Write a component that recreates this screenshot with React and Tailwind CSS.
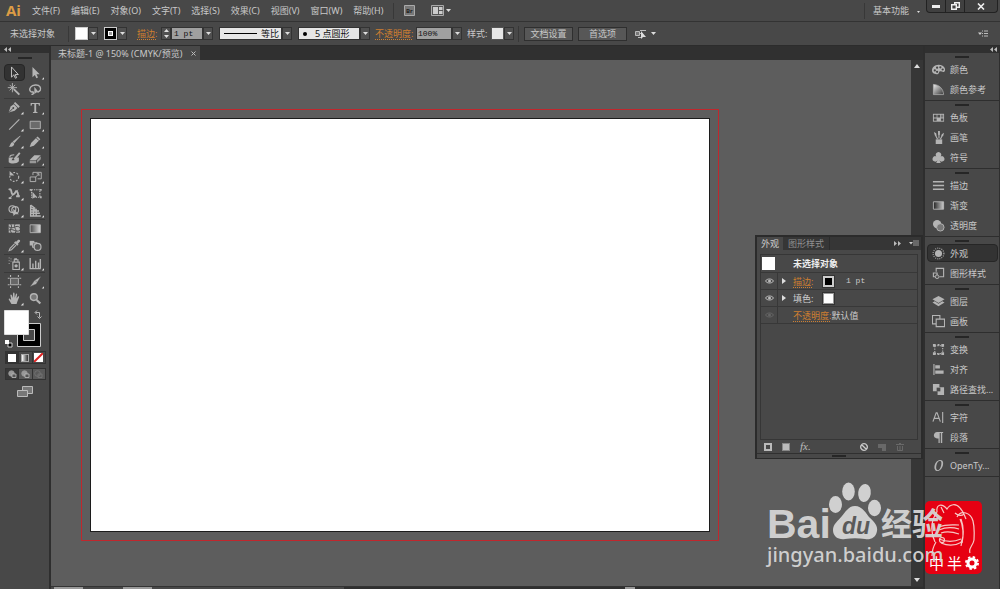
import { useState } from "react";

const line = { fill: "none", stroke: "currentColor", strokeWidth: 1.2 };

// Tool glyphs, drawn on a 14x14 grid
const glyphs = {
  select: <path d="M4 1v11l2.6-2.4 1.6 3.6 1.4-.6L8 9.200h3.400z" fill="#333" stroke="#ccc" strokeWidth="1" />,
  direct: <path d="M4 1v11l2.600-2.400 1.600 3.600 1.800-.8L8.400 9h3.400z" fill="currentColor" />,
  wand: (
    <>
      <path d="M6.500 6.500l6 6" stroke="currentColor" strokeWidth="2" />
      <path d="M5 0v10M0 5h10M2 2l6 6M8 2L2 8" stroke="currentColor" strokeWidth="1" />
    </>
  ),
  lasso: (
    <>
      <path d="M5 10C1 10 0 7 2 4.500S10 1 12 4s0 5-2 5.500M4 9c2 1 1 4-1 3" {...line} strokeWidth="1.500" />
      <path d="M6 4v8l2-1.800h3z" fill="currentColor" />
    </>
  ),
  pen: (
    <>
      <path d="M8 1l5 5-1.500 1.500-5-5zM6.500 3.500L3 6 1 12.500 7.500 10.500 10.500 7.500z" fill="currentColor" />
      <path d="M1.500 12l4-4" stroke="#444" strokeWidth="1" />
      <circle cx="6" cy="7.500" r="1" fill="#444" />
    </>
  ),
  type: <path d="M2 2h10v3h-1l-.6-1.700H8v8.200l1.500.5v1h-5v-1l1.500-.5V3.300H3.600L3 5H2z" fill="currentColor" />,
  line: <path d="M1.500 12.500l11-11" {...line} />,
  rect: <path d="M1.500 3.500h11v8h-11z" fill="#6b6b6b" stroke="currentColor" />,
  brush: (
    <>
      <path d="M13.500 1L7 8.500 5.500 7.200z" fill="currentColor" stroke="currentColor" strokeWidth=".6" />
      <path d="M5 7.500l2 1.800c0 2.500-3 4-6 3.200 2-1 1.500-4 4-5z" fill="currentColor" />
    </>
  ),
  pencil: (
    <>
      <path d="M9.500 1.500L12.500 4.500 5.500 11.500 1 13l1.500-4.500z" fill="currentColor" />
      <path d="M8 3l3 3" stroke="#444" />
    </>
  ),
  blob: (
    <>
      <path d="M1 6h5l-2 3h3l2-3h3v4c-2 3-9 3-11 1z" fill="currentColor" />
      <path d="M13 1L7 8" stroke="currentColor" strokeWidth="2" />
      <path d="M2 5c1-2 4-2 5-2" {...line} />
    </>
  ),
  eraser: (
    <>
      <path d="M6 3.500h7l-5 5H1z" fill="currentColor" />
      <path d="M1 9.200h7v3H1zM9 8.700l4-4v3l-4 4z" fill="#999" />
    </>
  ),
  rotate: (
    <>
      <circle cx="7" cy="7.500" r="4.800" {...line} strokeDasharray="2 1.500" />
      <path d="M2 1v5h5L5.500 4.200z" fill="currentColor" />
    </>
  ),
  scale: <path d="M1.500 7.500h6v5h-6zM4.500 5.500v-3h9v7h-4M7 8l4-4M8.500 4H11v2.500" {...line} strokeWidth="1" />,
  width: (
    <>
      <path d="M1 3c4-3 2 6 5 5s2-5 4-3 0 5 3 5" {...line} strokeWidth="2" />
      <path d="M2 12l9-9" {...line} strokeWidth="1" />
      <path d="M1 11h3v2H1zM9 9h3v2H9z" fill="currentColor" />
    </>
  ),
  transform: (
    <>
      <path d="M3 3h9v8H3z" {...line} strokeDasharray="1.500 1" />
      <path d="M4 5v8l2-2h3z" fill="currentColor" />
      <path d="M1 2h2v2H1zM12 2h2v2h-2zM12 10h2v2h-2z" fill="currentColor" />
    </>
  ),
  shape: (
    <>
      <circle cx="5" cy="5.500" r="3.700" {...line} />
      <circle cx="8" cy="6.500" r="3.700" {...line} />
      <path d="M6 5v8l2.200-2H12z" fill="currentColor" />
    </>
  ),
  perspective: (
    <path d="M2 1v12h11M5 3v10M8 5v8M2 4l7 4M2 7.500h9M2 10h10M2 1l5 4" {...line} strokeWidth="1.500" />
  ),
  mesh: (
    <>
      <path d="M1 2.500h12v9H1z" fill="currentColor" />
      <path d="M3 2c3 3-2 6 1 10M8 2c-3 4 3 6 0 10M1 5c5 4 8-3 12 1M1 9c4-3 8 3 12 0" stroke="#444" fill="none" />
    </>
  ),
  gradient: (
    <>
      <defs>
        <linearGradient id="toolGrad">
          <stop stopColor="#444" />
          <stop offset="1" stopColor="#ddd" />
        </linearGradient>
      </defs>
      <path d="M1.500 3h11v8.500h-11z" fill="url(#toolGrad)" stroke="currentColor" />
    </>
  ),
  eyedropper: (
    <>
      <path d="M9 3l2-2c2-1 3 1 2 2l-2 2 .7.700-1.500 1.500L6.800 3.800l1.500-1.500z" fill="currentColor" />
      <path d="M7.500 5L2.500 10 1.500 12.500 4 11.500 9 6.500" {...line} />
    </>
  ),
  blend: (
    <>
      <path d="M1 2h5v5H1z" fill="currentColor" />
      <path d="M4 4h5v5H4z" fill="#777" stroke="currentColor" />
      <circle cx="9.500" cy="8.500" r="3.700" fill="#555" stroke="currentColor" strokeWidth="1.300" />
    </>
  ),
  spray: (
    <>
      <path d="M5.500 5.500h7v8h-7zM7 5V3h4v2M7 2h3" {...line} />
      <circle cx="9" cy="9.500" r="1.800" fill="currentColor" />
      <path d="M4 2H3M2 1H1M2 4H1M4 4.500H3M1 7h1" stroke="currentColor" />
    </>
  ),
  graph: <path d="M1.500 1v11.500H13M4.500 12V7M7.500 12V4M10.500 12V6M12.500 12V2" {...line} strokeWidth="1.500" />,
  artboard: (
    <>
      <path d="M3 3.500h8.500v7H3z" fill="#666" stroke="currentColor" />
      <path d="M3 0v2M11.500 0v2M3 12v2M11.500 12v2M0 3.500h2M0 10.500h2M12.500 3.500h2M12.500 10.500h2" {...line} />
    </>
  ),
  slice: <path d="M13.500 1L6 6 4 9 1 13l4-2 3-1zM7 6l2 2" fill="currentColor" stroke="#444" strokeWidth=".5" />,
  hand: (
    <path
      d="M4 13L1 8c0-1 1-1.500 2 0l.7.700L2.800 3.500c0-1.200 1.200-1.200 1.600 0l1 3L5.700 1.500c.2-1.200 1.500-1.200 1.600 0l.2 4.800 1.200-4c.4-1.200 1.500-.8 1.400.3l-.7 4.400 1.500-2c.8-1 1.700-.3 1.300.6L10.500 10 9.500 13z"
      fill="currentColor"
    />
  ),
  zoom: (
    <>
      <circle cx="5.500" cy="5.500" r="3.700" fill="#777" stroke="currentColor" strokeWidth="1.500" />
      <path d="M8.500 8.500l4 4" stroke="currentColor" strokeWidth="2.300" />
    </>
  ),
};

const toolGroups = [
  ["select", "direct", "wand", "lasso"],
  ["pen", "type", "line", "rect", "brush", "pencil", "blob", "eraser"],
  ["rotate", "scale", "width", "transform", "shape", "perspective"],
  ["mesh", "gradient", "eyedropper", "blend"],
  ["spray", "graph"],
  ["artboard", "slice", "hand", "zoom"],
];

const noFlyout = ["select", "wand", "lasso", "transform", "mesh", "gradient", "blend", "artboard", "zoom"];

// Dock glyphs, same 14x14 grid
const dockGlyphs = {
  palette: (
    <>
      <path d="M7 2C3 2 0 5 0 8s3 4 6 4c2 0 1-3 3-3s4 2 5-1S11 2 7 2z" fill="currentColor" />
      <g fill="#444">
        <circle cx="3" cy="8" r="1.200" />
        <circle cx="5.500" cy="5" r="1.200" />
        <circle cx="9" cy="4.700" r="1.200" />
        <circle cx="11.500" cy="7" r="1.200" />
        <circle cx="5.500" cy="9.500" r="1.200" />
      </g>
    </>
  ),
  guide: (
    <>
      <defs>
        <linearGradient id="guideGrad" x1="0" y1="0" x2="1" y2="1">
          <stop stopColor="#eee" />
          <stop offset="1" stopColor="#333" />
        </linearGradient>
      </defs>
      <path d="M1.500 1.500C8 2 12 6 12.500 12.500h-11z" fill="url(#guideGrad)" stroke="currentColor" strokeWidth=".8" />
    </>
  ),
  swatches: (
    <>
      <path d="M1 3h12v8.500H1z" fill="currentColor" />
      <path d="M2 4h3v3H2zM5.800 4h3v3h-3zM2 8h3v2.500H2zM9.600 8h2.600v2.500H9.600z" fill="#4a4a4a" />
      <path d="M9.600 4h2.600v3H9.600z" fill="#777" />
    </>
  ),
  brushes: (
    <>
      <path d="M4 9h7v5H4z" fill="currentColor" />
      <path d="M6 9L3.500 4M7.500 8V3M9 9l2.500-5" {...line} />
      <path d="M2 1l2.500 1.500.5 2.500-2-.5zM6.500 0h2v4h-2zM13 2l-1 3.500-2 .5.500-2.500z" fill="currentColor" />
    </>
  ),
  symbols: (
    <path
      d="M7 1a3 3 0 0 1 2.400 4.800A2.900 2.900 0 1 1 8 10l1.500 3h-5L6 10a2.900 2.900 0 1 1-1.400-4.200A3 3 0 0 1 7 1z"
      fill="currentColor"
    />
  ),
  stroke: <path d="M1 3h12M1 7h12M1 11h12" stroke="currentColor" strokeWidth="1.500" />,
  gradient: (
    <>
      <defs>
        <linearGradient id="dockGrad">
          <stop stopColor="#222" />
          <stop offset="1" stopColor="#ccc" />
        </linearGradient>
      </defs>
      <path d="M1.500 3h11v8h-11z" fill="url(#dockGrad)" stroke="currentColor" />
    </>
  ),
  transparency: (
    <>
      <circle cx="5.500" cy="5.500" r="4.500" fill="currentColor" />
      <circle cx="9" cy="9" r="4" fill="#777" stroke="currentColor" />
    </>
  ),
  appearance: (
    <>
      <circle cx="7" cy="7" r="3.800" fill="currentColor" />
      <circle cx="7" cy="7" r="5.800" {...line} strokeDasharray="1 1.300" />
    </>
  ),
  styles: (
    <>
      <path d="M4.500 5V1.500h8v9H8" {...line} />
      <path d="M1.500 6.500h4v4h-4z" {...line} />
      <circle cx="5.500" cy="10.500" r="2" fill="#555" stroke="currentColor" />
    </>
  ),
  layers: (
    <>
      <path d="M7 1l6.500 3.700L7 8.500.5 4.700z" fill="currentColor" />
      <path d="M.5 8L3 6.800 7 9.300l4-2.500L13.500 8 7 12z" fill="currentColor" />
    </>
  ),
  artboards: <path d="M4.500 9.500h-4v-9h8v4M4.500 4.500h9v8h-9z" {...line} />,
  transform: (
    <>
      <path d="M3 3h8.500v8.500H3z" {...line} strokeDasharray="1.500 1.200" />
      <path d="M1 1h3v3H1zM10 1h3v3h-3zM1 10h3v3H1zM10 10h3v3h-3zM6 1h2v2H6zM6 11h2v2H6z" fill="currentColor" />
    </>
  ),
  align: <path d="M1.500 1h1.200v12H1.500zM3.500 2.500h5v3.500h-5zM3.500 8h9v3.500h-9z" fill="currentColor" />,
  pathfinder: (
    <>
      <path d="M1 1h7v3.500h5V13H6V9H1z" fill="currentColor" />
      <path d="M5 5h4v4H5z" fill="#4a4a4a" />
    </>
  ),
  character: <path d="M1 11.500L4.500 2h1L9 11.500M2.500 8h5M11.500 1v12" {...line} />,
  paragraph: <path d="M5.500 1H12v1.200h-1V13H9.500V2.200H8.300V13H7V8C3 8 2 6 2 4.500S3.500 1 5.500 1z" fill="currentColor" />,
  opentype: (
    <path
      fillRule="evenodd"
      d="M9 1c3 0 3.500 3 2.700 6S8.500 13 6 13s-4-2.500-3.200-6S6 1 9 1zM8.500 2C6.500 2 5.300 4.500 4.700 7S4.600 12 6.300 12s2.900-2.500 3.500-5S10.300 2 8.500 2z"
      fill="currentColor"
    />
  ),
};

const dockGroups = [
  [["palette", "颜色"], ["guide", "颜色参考"]],
  [["swatches", "色板"], ["brushes", "画笔"], ["symbols", "符号"]],
  [["stroke", "描边"], ["gradient", "渐变"], ["transparency", "透明度"]],
  [["appearance", "外观"], ["styles", "图形样式"]],
  [["layers", "图层"], ["artboards", "画板"]],
  [["transform", "变换"], ["align", "对齐"], ["pathfinder", "路径查找..."]],
  [["character", "字符"], ["paragraph", "段落"]],
  [["opentype", "OpenTy..."]],
];

const menus = ["文件(F)", "编辑(E)", "对象(O)", "文字(T)", "选择(S)", "效果(C)", "视图(V)", "窗口(W)", "帮助(H)"];

function Down() {
  return (
    <svg viewBox="0 0 5 3" className="w-[5px] h-[3px] shrink-0">
      <path d="M0 0h5L2.500 3z" fill="#ddd" />
    </svg>
  );
}

function DropButton({ label }) {
  return (
    <button
      aria-label={label}
      className="w-[10px] h-[13px] shrink-0 flex items-center justify-center bg-[#505050] border border-[#333]"
    >
      <Down />
    </button>
  );
}

function Divider() {
  return <span className="w-px h-4 shrink-0 bg-[#383838]" />;
}

function Chevrons({ right }) {
  return (
    <svg viewBox="0 0 7 5" className="w-[7px] h-[5px]">
      <path d={right ? "M0 0l3 2.500L0 5zM4 0l3 2.500L4 5z" : "M3 0L0 2.500 3 5zM7 0L4 2.500 7 5z"} fill="#bbb" />
    </svg>
  );
}

function MenuBar() {
  return (
    <header className="h-[22px] shrink-0 flex items-center pl-1.5 border-b border-[#333] bg-[#484848]">
      <span className="w-[26px] font-['Open_Sans',sans-serif] text-[15px] leading-none font-bold text-[#dc9c45]">Ai</span>
      <nav className="flex gap-[11px]">
        {menus.map((m) => (
          <button key={m}>{m}</button>
        ))}
      </nav>
      <div className="flex items-center gap-2.5 ml-2.5">
        <Divider />
        <button aria-label="Bridge">
          <svg viewBox="0 0 11 11" className="w-[11px] h-[11px]">
            <path d="M.5.500h10v10H.5z" fill="#777" stroke="#aaa" />
            <text x="2" y="8" fontSize="6" fontWeight="bold" fill="#222">Br</text>
          </svg>
        </button>
        <button aria-label="排列文档" className="flex items-center gap-0.5 ml-1.5">
          <svg viewBox="0 0 13 11" className="w-[13px] h-[11px]">
            <path d="M.5.500h12v10H.5z" fill="#555" stroke="#aaa" />
            <path d="M2 2h5v7H2zM8 2h3.500v3H8zM8 6h3.500v3H8z" fill="#ccc" />
          </svg>
          <Down />
        </button>
      </div>
      <div className="ml-auto self-stretch flex items-center">
        <Divider />
        <button className="flex items-center gap-2 pl-2 pr-1.5">
          基本功能
          <svg viewBox="0 0 3 2" className="w-[3px] h-0.5 mt-0.5">
            <path d="M0 0h3L1.500 2z" fill="#ddd" />
          </svg>
        </button>
        <div className="self-start h-[13px] mr-0.5 flex rounded-b-sm border border-t-0 border-[#222] bg-[#404040] divide-x divide-[#222]">
          <button aria-label="最小化" className="w-[19px] flex items-center justify-center">
            <span className="w-2 h-[3px] bg-[#eee]" />
          </button>
          <button aria-label="还原" className="w-[19px] flex items-center justify-center">
            <svg viewBox="0 0 9 8" className="w-[9px] h-2">
              <path d="M3.700.700h4.600v4.600H3.700z" fill="none" stroke="#eee" strokeWidth="1.400" />
              <path d="M.7 2.700h4.600v4.600H.7z" fill="#404040" stroke="#eee" strokeWidth="1.400" />
            </svg>
          </button>
          <button aria-label="关闭" className="w-8 flex items-center justify-center">
            <svg viewBox="0 0 8 7" className="w-2 h-[7px]">
              <path d="M1 .5l6 6M7 .5l-6 6" stroke="#eee" strokeWidth="1.600" />
            </svg>
          </button>
        </div>
      </div>
    </header>
  );
}

function OptionsBar() {
  return (
    <div className="h-6 shrink-0 flex items-center pl-2.5 pr-3 border-b border-[#2c2c2c] bg-[#484848] whitespace-nowrap">
      <span className="w-[58px]">未选择对象</span>
      <Divider />
      <div className="flex ml-1.5">
        <button aria-label="填色" className="w-[13px] h-[13px] bg-white border border-[#ccc]" />
        <DropButton label="填色选项" />
      </div>
      <div className="flex ml-1.5">
        <button aria-label="描边颜色" className="w-[13px] h-[13px] bg-black border border-[#ccc] flex items-center justify-center">
          <span className="w-[5px] h-[5px] border border-white bg-[#999]" />
        </button>
        <DropButton label="描边颜色选项" />
      </div>
      <label htmlFor="weight" className="w-6 ml-2.5 text-[#cf7f30] underline decoration-dotted underline-offset-2">
        描边:
      </label>
      <button aria-label="调整粗细" className="w-2.5 h-[13px] flex items-center justify-center bg-[#505050] border border-[#333]">
        <svg viewBox="0 0 5 9" className="w-[5px] h-[9px]">
          <path d="M0 3h5L2.500 0zM0 6h5L2.500 9z" fill="#ddd" />
        </svg>
      </button>
      <input
        id="weight"
        defaultValue="1 pt"
        className="w-8 h-[13px] px-0.5 bg-[#a0a0a0] border border-[#333] text-[#111] font-['Liberation_Mono',monospace] text-[8px]"
      />
      <DropButton label="粗细预设" />
      <div className="flex ml-1.5">
        <div className="w-[63px] h-[13px] pl-1 flex items-center gap-1 bg-[#e6e6e6] border border-[#333]">
          <span className="flex-1 h-px bg-black" />
          <select aria-label="变量宽度配置文件" className="appearance-none w-5 h-[11px] text-[#111] leading-none">
            <option>等比</option>
          </select>
        </div>
        <DropButton label="宽度配置列表" />
      </div>
      <div className="flex ml-1.5">
        <div className="w-[62px] h-[13px] px-1 flex items-center gap-2 bg-[#e6e6e6] border border-[#333]">
          <span className="w-1 h-1 rounded-full bg-black" />
          <select aria-label="画笔定义" className="appearance-none flex-1 h-[11px] text-[#111] leading-none">
            <option>5 点圆形</option>
          </select>
        </div>
        <DropButton label="画笔列表" />
      </div>
      <label htmlFor="opacity" className="w-[41px] ml-[5px] text-[#cf7f30] underline decoration-dotted underline-offset-2">
        不透明度:
      </label>
      <input
        id="opacity"
        defaultValue="100%"
        className="w-9 h-[13px] px-px bg-[#a0a0a0] border border-[#333] text-[#111] font-['Liberation_Mono',monospace] text-[8px]"
      />
      <DropButton label="不透明度预设" />
      <span className="w-6 ml-[5px]">样式:</span>
      <button aria-label="图形样式" className="w-[13px] h-[13px] bg-[#e6e6e6] border border-[#555]" />
      <DropButton label="图形样式选项" />
      <span className="ml-1 mr-[5px] flex">
        <Divider />
      </span>
      <button className="w-[49px] h-[14px] leading-none border border-[#2f2f2f] bg-[#575757]">文档设置</button>
      <button className="w-[49px] h-[14px] ml-[5px] leading-none border border-[#2f2f2f] bg-[#575757]">首选项</button>
      <button aria-label="选择类似对象" className="ml-2 flex items-center gap-1">
        <svg viewBox="0 0 12 10" className="w-3 h-2.5">
          <path d="M.5 2.500h4v4h-4zM5 1.500h6M5 4.500h3M3 8.500h3" fill="#777" stroke="#bbb" />
          <path d="M6 2v8l2-2h3z" fill="#ddd" />
        </svg>
        <Down />
      </button>
      <button aria-label="面板选项" className="ml-auto">
        <svg viewBox="0 0 10 7" className="w-2.5 h-[7px]">
          <path d="M0 2.500h4L2 5z" fill="#ccc" />
          <path d="M4 1h1M6 1h4M4 3.500h1M6 3.500h4M4 6h1M6 6h4" stroke="#bbb" />
        </svg>
      </button>
    </div>
  );
}

function Toolbar() {
  const [active, setActive] = useState("select");

  return (
    <aside className="w-[51px] shrink-0 border-r-2 border-[#2e2e2e] bg-[#484848]">
      <div className="h-[7px] pl-1 flex items-center bg-[#303030]">
        <Chevrons />
      </div>
      <div className="h-[11px] flex justify-center pt-1">
        <span className="w-3.5 h-0.5 bg-[#262626]" />
      </div>
      <div className="px-1 divide-y divide-[#3a3a3a]">
        {toolGroups.map((group) => (
          <div key={group[0]} className="grid grid-cols-2">
            {group.map((name) => (
              <button
                key={name}
                aria-label={name}
                onClick={() => setActive(name)}
                className={
                  active === name
                    ? "h-[17px] text-[#b4b4b4] bg-[#323232] rounded-sm border border-[#262626]"
                    : "h-[17px] text-[#b4b4b4] border border-transparent"
                }
              >
                <svg viewBox="0 0 20 15" className="w-full h-full">
                  <g transform="translate(3 .5)">{glyphs[name]}</g>
                  {!noFlyout.includes(name) && <path d="M20 15h-3l3-3z" fill="#ddd" />}
                </svg>
              </button>
            ))}
          </div>
        ))}
      </div>
      {/* Fill and stroke */}
      <svg viewBox="0 0 49 40" className="w-[49px] h-10 mt-0.5">
        <path d="M17.500 14.500h23v23h-23z" fill="#000" stroke="#ccc" />
        <path d="M23.500 20.500h11v11h-11z" fill="#484848" stroke="#ccc" />
        <path d="M4.500 1.500h24v24h-24z" fill="#fff" stroke="#ddd" />
        <path d="M35.500 3.500h4v5M37 1.500l-2 2 2 2M37.500 7.500l2 2 2-2" fill="none" stroke="#bbb" />
        <path d="M8 34h4v4H8z" fill="#000" stroke="#ccc" />
        <path d="M5 31h4v4H5z" fill="#fff" />
      </svg>
      <div className="ml-[5px] mr-[3px] mt-0.5 h-[13px] flex border border-[#333] divide-x divide-[#333] *:flex-1 *:flex *:items-center *:justify-center">
        <button aria-label="颜色" className="bg-[#333]">
          <span className="w-2 h-2 bg-white" />
        </button>
        <button aria-label="渐变">
          <span className="w-2 h-2 border border-[#aaa] bg-linear-to-r from-white to-[#333]" />
        </button>
        <button aria-label="无">
          <svg viewBox="0 0 9 9" className="w-[9px] h-[9px]">
            <path d="M0 0h9v9H0z" fill="#fff" />
            <path d="M0 9L9 0" stroke="#d22" strokeWidth="2" />
          </svg>
        </button>
      </div>
      <div className="ml-[5px] mr-[3px] mt-1 h-3 flex border border-[#333] divide-x divide-[#333] *:flex-1 *:flex *:items-center *:justify-center">
        {["正常绘图", "背面绘图", "内部绘图"].map((mode, i) => (
          <button key={mode} aria-label={mode} className={i === 0 ? "bg-[#383838]" : "bg-[#5a5a5a]"}>
            <svg viewBox="0 0 9 8" className="w-[9px] h-2">
              <circle cx="3.500" cy="3.500" r="2.800" fill={i === 2 ? "none" : "#999"} stroke={i === 2 ? "#777" : "#999"} strokeWidth=".8" />
              <path d="M4 4h4v3.500H4z" fill={i === 2 ? "none" : "#555"} stroke={i === 2 ? "#777" : "#bbb"} strokeWidth=".8" />
            </svg>
          </button>
        ))}
      </div>
      <button aria-label="更改屏幕模式" className="block mx-auto mt-1.5">
        <svg viewBox="0 0 16 12" className="w-4 h-3">
          <path d="M5.500.500h10v7h-10z" fill="#777" stroke="#bbb" />
          <path d="M.5 4.500h10v6H.5z" fill="#777" stroke="#bbb" />
        </svg>
      </button>
    </aside>
  );
}

function Eye({ dim }) {
  return (
    <svg viewBox="0 0 9 6" className={dim ? "w-[9px] h-1.5 opacity-25" : "w-[9px] h-1.5"}>
      <path d="M.5 3C2 .3 7 .3 8.500 3 7 5.700 2 5.700.5 3z" fill="none" stroke="#bbb" />
      <circle cx="4.500" cy="3" r="1.500" fill="#bbb" />
    </svg>
  );
}

function AppearanceRow({ dim, arrow, children }) {
  return (
    <li className="h-[17px] flex items-center">
      <span className="w-[17px] self-stretch flex items-center justify-center border-r border-[#383838]">
        <Eye dim={dim} />
      </span>
      <span className="w-[15px] pl-1">
        {arrow && (
          <svg viewBox="0 0 4 6" className="w-1 h-1.5">
            <path d="M0 0l4 3-4 3z" fill="#ddd" />
          </svg>
        )}
      </span>
      {children}
    </li>
  );
}

function AppearancePanel() {
  return (
    <section className="absolute top-[189px] right-0 w-[168px] border-2 border-b border-[#2b2b2b] bg-[#484848] text-[#ccc]">
      <div className="h-[13px] flex items-stretch bg-[#363636]">
        <button className="w-[26px] bg-[#484848]">外观</button>
        <button className="px-[5px] text-[#909090] border-r border-[#2b2b2b]">图形样式</button>
        <span className="ml-auto flex items-center gap-2 pr-0.5">
          <Chevrons right />
          <svg viewBox="0 0 10 7" className="w-2.5 h-[7px]">
            <path d="M0 2h4L2 4.500z" fill="#ccc" />
            <path d="M4 1h6M4 3h6M4 5h6" stroke="#999" />
          </svg>
        </span>
      </div>
      <ul className="mx-[3px] mt-1 h-[186px] border border-[#363636] divide-y divide-[#383838]">
        <li className="h-[18px] pl-px flex items-center font-bold text-[#eee]">
          <span className="w-[13px] h-[13px] mr-[18px] bg-white" />
          未选择对象
        </li>
        <AppearanceRow arrow>
          <a href="#stroke" className="w-[30px] text-[#cf7f30] underline decoration-dotted underline-offset-2">描边:</a>
          <span className="w-[11px] h-[11px] mr-3 bg-black border-2 border-[#ccc] outline outline-[#333]" />
          <span className="font-['Liberation_Mono',monospace] text-[8px]">1 pt</span>
        </AppearanceRow>
        <AppearanceRow arrow>
          <span className="w-[30px]">填色:</span>
          <span className="w-[11px] h-[11px] bg-white border border-[#999] outline outline-[#333]" />
        </AppearanceRow>
        <AppearanceRow dim>
          <a href="#opacity" className="text-[#cf7f30] underline decoration-dotted underline-offset-2">不透明度:</a>
          默认值
        </AppearanceRow>
        <li />
      </ul>
      <div className="h-[13px] px-[7px] flex items-center gap-2.5 text-[#bbb]">
        <button aria-label="添加新描边" className="w-2 h-2 border-2 border-[#bbb]" />
        <button aria-label="添加新填色" className="w-2 h-2 border border-[#888] bg-[#bbb]" />
        <button aria-label="添加新效果" className="font-['Liberation_Serif',serif] text-[11px] leading-none italic">fx.</button>
        <button aria-label="清除外观" className="ml-auto">
          <svg viewBox="0 0 8 8" className="w-2 h-2">
            <path d="M4 .7a3.300 3.300 0 1 0 .01 0zM1.700 1.700l4.600 4.600" fill="none" stroke="#ccc" strokeWidth="1.300" />
          </svg>
        </button>
        <button aria-label="复制所选项目">
          <svg viewBox="0 0 8 8" className="w-2 h-2">
            <path d="M0 1h8v7H4V5H0z" fill="#686868" />
          </svg>
        </button>
        <button aria-label="删除所选项目" className="mr-2.5">
          <svg viewBox="0 0 8 8" className="w-2 h-2">
            <path d="M0 1.500h8M3 .5h2M1.500 3v4.500h5V3M4 3v4" fill="none" stroke="#686868" />
          </svg>
        </button>
      </div>
      <div className="h-[5px] flex items-center justify-center border-t border-[#303030]">
        <span className="w-3.5 h-0.5 bg-[#262626]" />
      </div>
    </section>
  );
}

function Workspace() {
  return (
    <main className="relative flex-1 min-w-0 flex flex-col">
      <div className="h-3.5 shrink-0 flex bg-[#303030]">
        <div className="w-[149px] pl-[7px] pr-1 flex items-center justify-between bg-[#484848] whitespace-nowrap">
          未标题-1 @ 150% (CMYK/预览)
          <button aria-label="关闭文档">
            <svg viewBox="0 0 5 5" className="w-[5px] h-[5px]">
              <path d="M.5.500l4 4M4.500.500l-4 4" stroke="#bbb" />
            </svg>
          </button>
        </div>
      </div>
      <div className="flex-1 min-h-0 flex">
        <div className="flex-1 flex bg-[#5d5d5d] pt-[49px] pl-[30px] pr-[192px] pb-[45px]">
          {/* Bleed line around the artboard */}
          <div className="flex-1 flex p-2 border border-[#c1272d]">
            <div className="flex-1 border border-[#1c1c1c] bg-white" />
          </div>
        </div>
        <div className="w-3 shrink-0 py-1 flex flex-col items-center justify-between bg-[#363636]">
          <svg viewBox="0 0 6 4" className="w-1.5 h-1">
            <path d="M0 4h6L3 0z" fill="#ddd" />
          </svg>
          <svg viewBox="0 0 6 4" className="w-1.5 h-1">
            <path d="M0 0h6L3 4z" fill="#ddd" />
          </svg>
        </div>
      </div>
      <div className="h-[3px] shrink-0 flex border-t border-[#333] bg-[#2f2f2f]">
        <div className="w-[293px] pl-[3px] flex gap-10 bg-[#484848]">
          <span className="w-[29px] bg-[#9a9a9a]" />
          <span className="w-[29px] bg-[#9a9a9a]" />
        </div>
        <span className="w-2.5 ml-[281px] bg-[#9a9a9a]" />
      </div>
      <AppearancePanel />
    </main>
  );
}

function Dock() {
  const [open, setOpen] = useState("appearance");

  return (
    <aside className="w-[77px] shrink-0 border-l-2 border-r border-[#2e2e2e] bg-[#484848]">
      <div className="h-[7px] pr-0.5 flex items-center justify-end bg-[#303030]">
        <Chevrons />
      </div>
      {dockGroups.map((group) => (
        <div key={group[0][0]} className="pb-px border-b border-[#2e2e2e]">
          <div className="h-1.5 flex justify-center pt-[3px]">
            <span className="w-3.5 h-0.5 bg-[#262626]" />
          </div>
          {group.map(([name, label]) => (
            <div key={name} className="h-5 pl-0.5 pr-px flex items-center">
              <button
                onClick={() => setOpen(name)}
                className={
                  open === name
                    ? "w-full h-[18px] pl-1 flex items-center gap-[5px] whitespace-nowrap rounded-sm border border-[#262626] bg-[#333]"
                    : "w-full h-[18px] pl-1 flex items-center gap-[5px] whitespace-nowrap border border-transparent"
                }
              >
                <svg viewBox="0 0 14 14" className="w-[13px] h-[13px] shrink-0 text-[#b4b4b4]">
                  {dockGlyphs[name]}
                </svg>
                {label}
              </button>
            </div>
          ))}
        </div>
      ))}
    </aside>
  );
}

function Watermark() {
  return (
    <div className="absolute right-[17px] bottom-[14px] pointer-events-none">
      <svg viewBox="0 0 220 94" className="w-[220px] h-[94px]" fontFamily="'Noto Sans','Noto Sans CJK SC',sans-serif">
        <rect x="162" y="20" width="57" height="73" rx="5" fill="#e60012" />
        <g fill="none" stroke="#f6c9c6" strokeWidth="1.200">
          <path d="M174 31c-1-8 5-9 10-3 3-5 9-6 13-1 4 4 4 7 6 11" />
          <path d="M174 31c-6 8-7 20-2 30M178 26l3 6M194 36c4-8 14-4 16 4 2 8 1 14 1 19-1 6-6 8-4 13" />
          <path d="M176 49c7-3 13-3 20-1M176 46c7-3 13-2 20-2M178 52c6-2 12-1 18 1M198 38c3 8 3 18 0 23M176 58c7 3 15 3 22 0M178 62c7 3 14 3 21-1M199 62c2-8 1-18-2-24" />
          <path d="M173 61c-3 5-4 9-4 14M199 60l-1 5M192 32c3 3 7 3 9 1" />
          <circle cx="179" cy="59" r="2.500" />
        </g>
        <text x="166" y="88" fontSize="15" fill="#fff">中</text>
        <text x="184" y="88" fontSize="15" fill="#fff">半</text>
        <circle cx="209" cy="82" r="4" fill="none" stroke="#fff" strokeWidth="3" />
        <circle cx="209" cy="82" r="6" fill="none" stroke="#fff" strokeWidth="2" strokeDasharray="2.400 2.312" />
        <g fill="#d6d6d6" fillOpacity=".95">
          <text x="4" y="57" fontSize="41" fontWeight="bold" fontFamily="'Liberation Sans',sans-serif">Bai</text>
          <ellipse cx="72.500" cy="23.500" rx="6.500" ry="8.500" />
          <ellipse cx="85.500" cy="10.500" rx="6.300" ry="9" />
          <ellipse cx="101.500" cy="12" rx="6.300" ry="9" transform="rotate(8 101.500 12)" />
          <ellipse cx="111.500" cy="27" rx="6.500" ry="8.300" />
          <path d="M92 25c7 0 10 6 14 11 5 5 9 8 8 14-1 7-7 9-12 8-7-1-13-1-20 0-6 1-12-2-12-9 0-6 5-9 9-14s7-10 13-10z" />
          <text x="118" y="54" fontSize="31" fontWeight="bold">经验</text>
          <text x="4" y="81" fontSize="20" fontWeight="500">jingyan.baidu.com</text>
        </g>
        <text x="79" y="53" fontSize="23" fontWeight="bold" fontStyle="italic" fontFamily="'Liberation Sans',sans-serif" fill="#5a5a5a">
          du
        </text>
      </svg>
    </div>
  );
}

export default function App() {
  return (
    <div className="relative h-screen flex flex-col overflow-hidden bg-[#484848] text-[#c8c8c8] text-[9px] leading-none font-['Noto_Sans','Noto_Sans_CJK_SC',sans-serif]">
      <MenuBar />
      <OptionsBar />
      <div className="flex-1 min-h-0 flex">
        <Toolbar />
        <Workspace />
        <Dock />
      </div>
      <Watermark />
    </div>
  );
}
